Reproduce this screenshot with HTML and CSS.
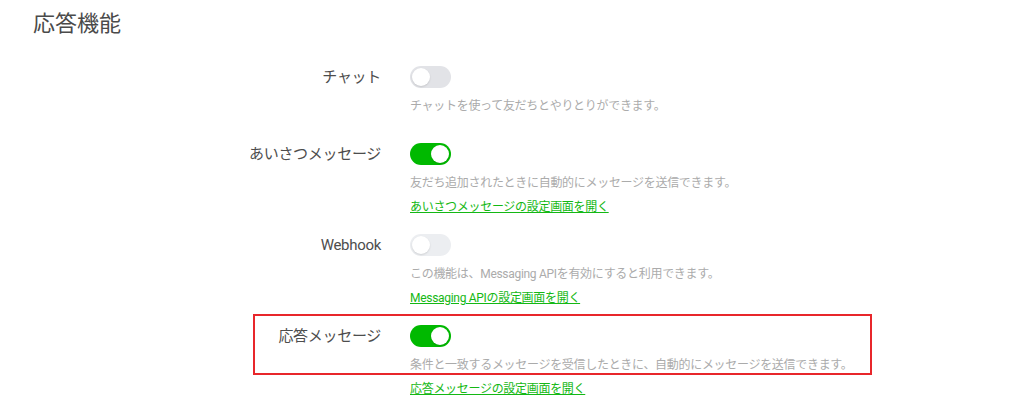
FILE: index.html
```html
<!DOCTYPE html>
<html lang="ja">
<head>
<meta charset="utf-8">
<title>応答機能</title>
<link rel="stylesheet" href="styles.css">
</head>
<body>
<h1 class="title">応答機能</h1>
<div class="settings">
  <div class="row">
    <div class="label">チャット</div>
    <div class="content">
      <span class="toggle"></span>
      <p class="desc">チャットを使って友だちとやりとりができます。</p>
    </div>
  </div>
  <div class="row">
    <div class="label">あいさつメッセージ</div>
    <div class="content">
      <span class="toggle on"></span>
      <p class="desc">友だち追加されたときに自動的にメッセージを送信できます。</p>
      <a class="link" href="#">あいさつメッセージの設定画面を開く</a>
    </div>
  </div>
  <div class="row">
    <div class="label">Webhook</div>
    <div class="content">
      <span class="toggle disabled"></span>
      <p class="desc">この機能は、Messaging APIを有効にすると利用できます。</p>
      <a class="link" href="#">Messaging APIの設定画面を開く</a>
    </div>
  </div>
  <div class="row highlighted">
    <div class="label">応答メッセージ</div>
    <div class="content">
      <span class="toggle on"></span>
      <p class="desc">条件と一致するメッセージを受信したときに、自動的にメッセージを送信できます。</p>
      <a class="link" href="#">応答メッセージの設定画面を開く</a>
    </div>
    <div class="highlight-box"></div>
  </div>
</div>
</body>
</html>
```

FILE: styles.css
```css
body {
  margin: 0;
  background: #ffffff;
  font-family: Roboto, "Noto Sans CJK JP", sans-serif;
  color: #333333;
}

.title {
  margin: 0;
  padding: 8px 0 0 33px;
  font-size: 22px;
  line-height: 32px;
  font-weight: normal;
  color: #4a4a4a;
}

.settings {
  padding: 26px 0 0 200px;
}

.row {
  display: flex;
  gap: 29px;
  margin-bottom: 18px;
}

.row.highlighted {
  position: relative;
}

.label {
  width: 181px;
  text-align: right;
  font-size: 15px;
  line-height: 22px;
  letter-spacing: -0.3px;
  color: #4d4d4d;
}

.content {
  display: flex;
  flex-direction: column;
  align-items: flex-start;
  min-height: 59px;
}

.toggle {
  position: relative;
  display: block;
  width: 41px;
  height: 22px;
  border-radius: 11px;
  background: #e2e3e7;
}

.toggle::after {
  content: "";
  position: absolute;
  top: 2px;
  left: 2px;
  width: 18px;
  height: 18px;
  border-radius: 50%;
  background: #ffffff;
  box-shadow: 0 1px 2px rgba(0, 0, 0, 0.12);
}

.toggle.disabled {
  background: #eceef1;
}

.toggle.on {
  background: #00b900;
}

.toggle.on::after {
  left: 21px;
}

.desc {
  margin: 9px 0 0;
  font-size: 12px;
  line-height: 18px;
  letter-spacing: -0.3px;
  color: #ababab;
}

.link {
  margin-top: 6px;
  font-size: 12px;
  line-height: 18px;
  letter-spacing: -0.3px;
  color: #14b814;
  text-decoration: underline;
}

.highlight-box {
  position: absolute;
  left: 53px;
  top: -11px;
  width: 619px;
  height: 61px;
  box-sizing: border-box;
  border: 2px solid #e8262b;
  pointer-events: none;
}
```
